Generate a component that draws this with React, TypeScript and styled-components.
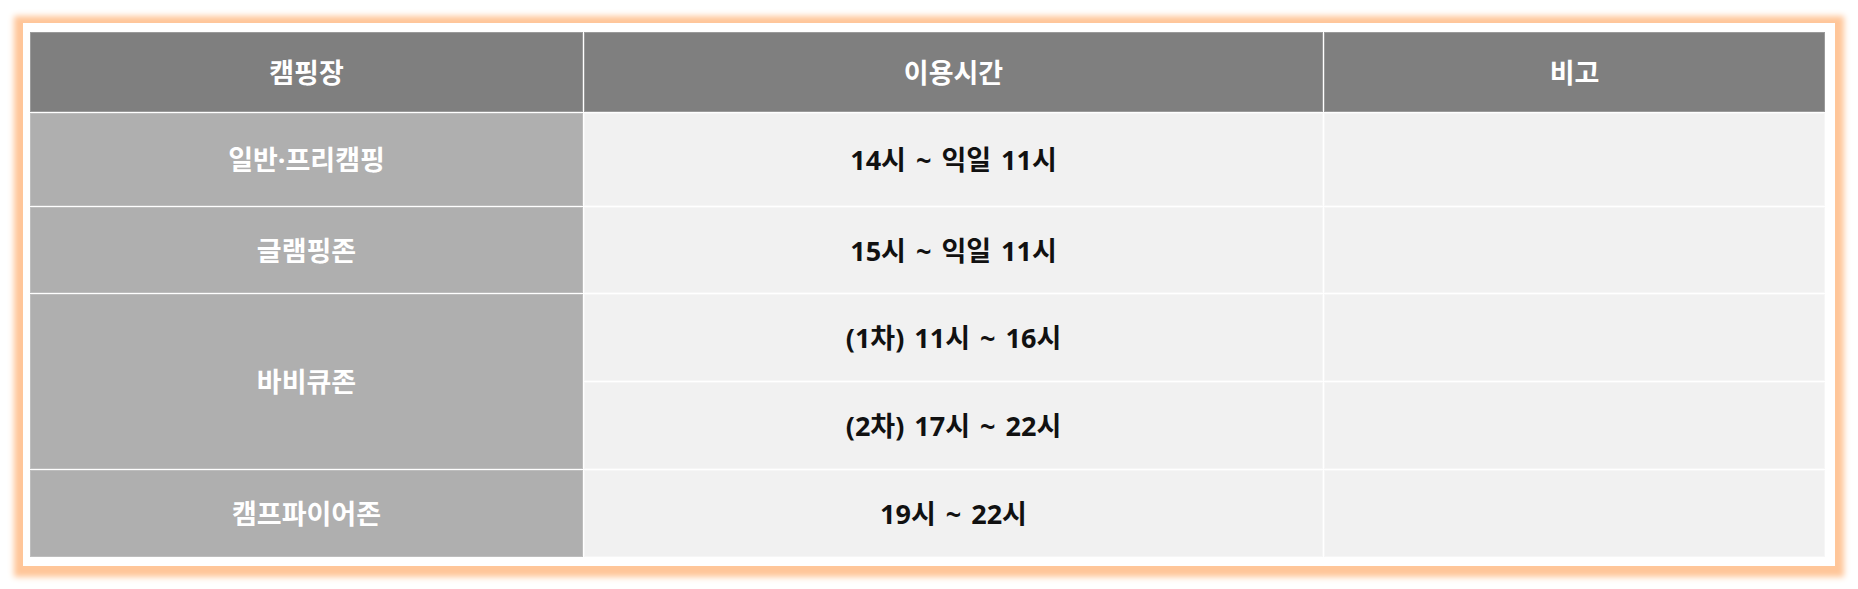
import React from 'react';
import styled, { createGlobalStyle } from 'styled-components';

const GlobalStyle = createGlobalStyle`
  html, body {
    margin: 0;
    padding: 0;
    background: #ffffff;
  }
  body {
    font-family: "Open Sans", "Noto Sans CJK KR", sans-serif;
  }
`;

type Slot = { label?: string; span?: number; time: string };

const rows: Slot[] = [
  { label: '일반·프리캠핑', time: '14시 ~ 익일 11시' },
  { label: '글램핑존', time: '15시 ~ 익일 11시' },
  { label: '바비큐존', span: 2, time: '(1차) 11시 ~ 16시' },
  { time: '(2차) 17시 ~ 22시' },
  { label: '캠프파이어존', time: '19시 ~ 22시' },
];

const rowHeights = [93, 86, 87, 87, 87];

const App = () => {
  return (
    <>
      <GlobalStyle />
      <Page>
        <Frame>
          <Table>
            <colgroup>
              <col style={{ width: 553 }} />
              <col style={{ width: 739 }} />
              <col />
            </colgroup>
            <thead>
              <Row $height={80}>
                <HeadCell>캠핑장</HeadCell>
                <HeadCell>이용시간</HeadCell>
                <HeadCell>비고</HeadCell>
              </Row>
            </thead>
            <tbody>
              {rows.map((row, i) => (
                <Row key={row.time} $height={rowHeights[i]}>
                  {row.label && <NameCell rowSpan={row.span || 1}>{row.label}</NameCell>}
                  <TimeCell>{row.time}</TimeCell>
                  <TimeCell />
                </Row>
              ))}
            </tbody>
          </Table>
        </Frame>
      </Page>
    </>
  );
};

export default App;

const Page = styled.div`
  width: 1858px;
  height: 589px;
  padding: 23px;
  box-sizing: border-box;
`;

const Frame = styled.div`
  width: 1812px;
  height: 543px;
  box-sizing: border-box;
  padding: 8px 9px 9px 6px;
  background: #ffffff;
  box-shadow: 0 2px 6px 9px #ffc699;
`;

const Table = styled.table`
  width: 100%;
  table-layout: fixed;
  border-collapse: separate;
  border-spacing: 1px;
  background: #ffffff;
`;

const Row = styled.tr<{ $height: number }>`
  height: ${(p) => p.$height}px;
`;

const Cell = styled.td`
  padding: 0;
  text-align: center;
  vertical-align: middle;
  font-size: 27px;
  font-weight: 700;
  word-spacing: 3px;
  line-height: 1;
`;

const HeadCell = styled(Cell).attrs({ as: 'th' })`
  background: #7f7f7f;
  border: 1px solid #9a9a9a;
  color: #ffffff;
`;

const NameCell = styled(Cell)`
  background: #afafaf;
  border: 1px solid #bdbdbd;
  color: #ffffff;
`;

const TimeCell = styled(Cell)`
  background: #f1f1f1;
  border: 1px solid #f6f6f6;
  color: #111111;
`;
